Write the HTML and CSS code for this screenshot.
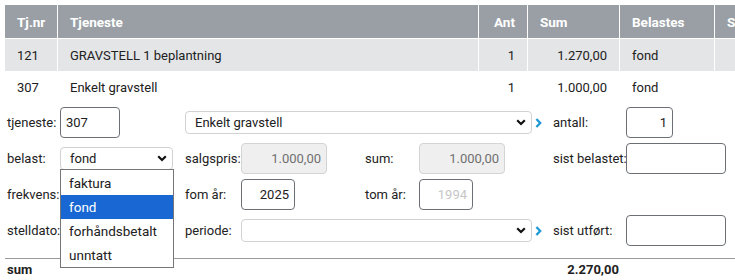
FILE: index.html
```html
<!DOCTYPE html>
<html lang="no">
<head>
    <meta charset="UTF-8">
    <meta name="viewport" content="width=device-width, initial-scale=1.0">
    <title>Tjenester</title>
    <link rel="stylesheet" href="styles.css">
</head>
<body>
    <div class="page">
        <div class="list">
            <div class="cell head">Tj.nr</div>
            <div class="cell head">Tjeneste</div>
            <div class="cell head num">Ant</div>
            <div class="cell head">Sum</div>
            <div class="cell head">Belastes</div>
            <div class="cell head">S</div>

            <div class="cell shaded">121</div>
            <div class="cell shaded">GRAVSTELL 1 beplantning</div>
            <div class="cell shaded num">1</div>
            <div class="cell shaded num">1.270,00</div>
            <div class="cell shaded">fond</div>
            <div class="cell shaded"></div>

            <div class="cell">307</div>
            <div class="cell">Enkelt gravstell</div>
            <div class="cell num">1</div>
            <div class="cell num">1.000,00</div>
            <div class="cell">fond</div>
            <div class="cell"></div>
        </div>

        <div class="form">
            <label class="lbl">tjeneste:</label>
            <div class="field w60">307</div>
            <div class="select-wrap span4">
                <div class="select w347"><span>Enkelt gravstell</span>
                    <svg class="caret" width="10" height="7" viewBox="0 0 10 7"><polyline points="1.2,1.2 5,5 8.8,1.2" fill="none" stroke="#111" stroke-width="2.2"/></svg>
                </div>
                <svg class="next" width="7" height="10" viewBox="0 0 7 10"><polyline points="1.4,1 5.2,5 1.4,9" fill="none" stroke="#1e9ad6" stroke-width="2.3"/></svg>
            </div>
            <label class="lbl">antall:</label>
            <div class="field w47 right">1</div>

            <label class="lbl">belast:</label>
            <div class="select-wrap">
                <div class="select w113 open"><span>fond</span>
                    <svg class="caret" width="10" height="7" viewBox="0 0 10 7"><polyline points="1.2,1.2 5,5 8.8,1.2" fill="none" stroke="#111" stroke-width="2.2"/></svg>
                    <ul class="options">
                        <li>faktura</li>
                        <li class="active">fond</li>
                        <li>forhåndsbetalt</li>
                        <li>unntatt</li>
                    </ul>
                </div>
            </div>
            <label class="lbl">salgspris:</label>
            <div class="field w86 right disabled">1.000,00</div>
            <label class="lbl">sum:</label>
            <div class="field w86 right disabled">1.000,00</div>
            <label class="lbl">sist belastet:</label>
            <div class="field w100"></div>

            <label class="lbl">frekvens:</label>
            <div></div>
            <label class="lbl">fom år:</label>
            <div class="field w54 right">2025</div>
            <label class="lbl">tom år:</label>
            <div class="field w54 right faint">1994</div>
            <div></div>
            <div></div>

            <label class="lbl">stelldato:</label>
            <div></div>
            <label class="lbl">periode:</label>
            <div class="select-wrap span3">
                <div class="select w291"><span></span>
                    <svg class="caret" width="10" height="7" viewBox="0 0 10 7"><polyline points="1.2,1.2 5,5 8.8,1.2" fill="none" stroke="#111" stroke-width="2.2"/></svg>
                </div>
                <svg class="next" width="7" height="10" viewBox="0 0 7 10"><polyline points="1.4,1 5.2,5 1.4,9" fill="none" stroke="#1e9ad6" stroke-width="2.3"/></svg>
            </div>
            <label class="lbl">sist utført:</label>
            <div class="field w100"></div>
        </div>

        <div class="total">
            <span>sum</span>
            <span>2.270,00</span>
        </div>
    </div>
</body>
</html>
```

FILE: styles.css
```css
* {
    margin: 0;
    padding: 0;
    box-sizing: border-box;
}

body {
    font-family: Roboto, 'Liberation Sans', sans-serif;
    font-size: 13px;
    color: #212121;
    background: #fff;
    overflow: hidden;
}

.page {
    padding: 5px 0 0 5px;
    width: 735px;
    overflow: hidden;
}

/* liste over tjenester */
.list {
    display: grid;
    grid-template-columns: 52px 420px 48px 91px 94px 1fr;
    grid-template-rows: 33px 32px 31px;
    gap: 1px;
    width: 730px;
    background: #fff;
}

.cell {
    display: flex;
    align-items: center;
    padding: 0 12px;
    white-space: nowrap;
    overflow: hidden;
    background: #fff;
}

.cell.head {
    background: #9a9fa6;
    color: #fff;
    font-weight: bold;
    font-size: 13.5px;
}

.cell.shaded {
    background: #e4e5e7;
}

.cell.num {
    justify-content: flex-end;
}

/* skjema */
.form {
    display: grid;
    grid-template-columns: 53px 125px 56px 124px 54px 134px 73px 100px;
    grid-auto-rows: 31px;
    row-gap: 5px;
    align-items: center;
    margin: 4px 0 0 2px;
}

.lbl {
    white-space: nowrap;
    color: #222;
}

.field {
    height: 31px;
    border: 1px solid #6c7075;
    border-radius: 4px;
    padding: 0 5px;
    display: flex;
    align-items: center;
    background: #fff;
}

.field.right {
    justify-content: flex-end;
}

.field.disabled {
    background: #efefef;
    border-color: #d4d4d4;
    color: #6f6f6f;
}

.field.faint {
    color: #c6c6c6;
}

.w47 { width: 47px; }
.w54 { width: 54px; }
.w60 { width: 60px; }
.w86 { width: 86px; }
.w100 { width: 100px; }
.w113 { width: 113px; }
.w291 { width: 291px; }
.w347 { width: 347px; }

.span4 { grid-column: span 4; }
.span3 { grid-column: span 3; }

.select-wrap {
    display: flex;
    align-items: center;
}

.select {
    position: relative;
    height: 23px;
    border: 1px solid #d2d2d2;
    border-radius: 4px;
    display: flex;
    align-items: center;
    justify-content: space-between;
    padding: 0 5px 0 9px;
    background: #fff;
}

.next {
    margin-left: 3px;
}

/* åpen nedtrekksliste */
.options {
    position: absolute;
    top: 100%;
    left: -1px;
    width: 114px;
    list-style: none;
    background: #fff;
    border: 1px solid #767676;
    padding: 1px 0 0;
    z-index: 2;
}

.options li {
    height: 24px;
    line-height: 24px;
    padding-left: 8px;
    font-size: 13.5px;
}

.options li.active {
    background: #1967d2;
    color: #fff;
}

.total {
    margin-top: 12px;
    border-top: 1px solid #999;
    width: 730px;
    display: flex;
    font-weight: bold;
    padding: 2px 0 0 2px;
    line-height: 17px;
}

.total span:first-child {
    width: 0;
}

.total span:last-child {
    width: 612px;
    text-align: right;
}
```
